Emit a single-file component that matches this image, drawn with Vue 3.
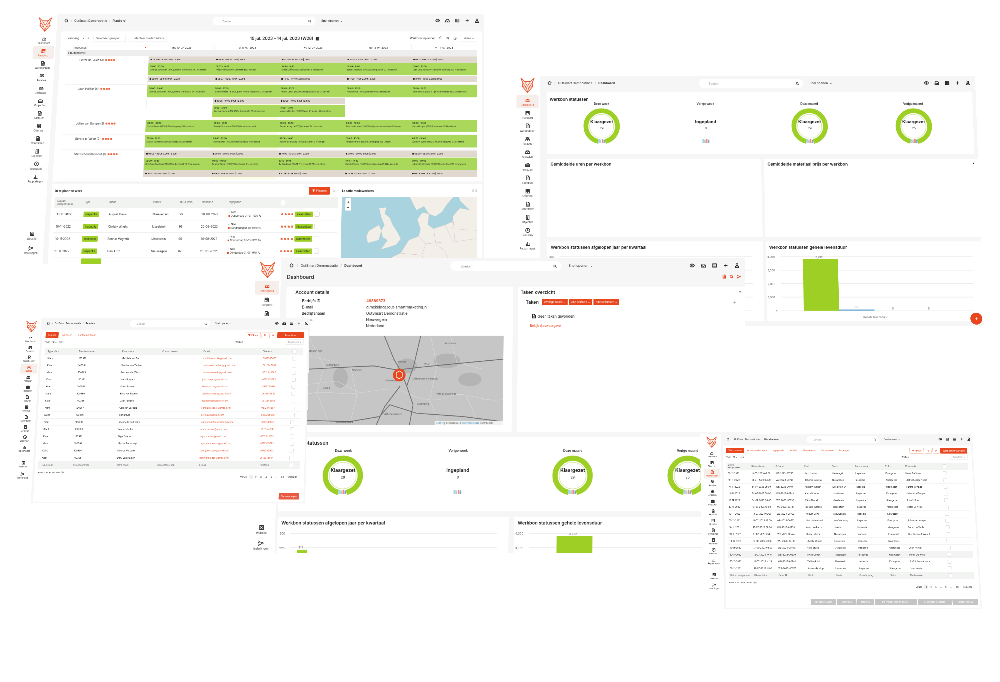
<script setup>
const icons = {
  dash: 'M3 11a5 5 0 1 1 10 0M8 11l2.5-3.5M2 13h12',
  plan: 'M3 4h10v10H3zM3 7h10M5.5 2v3M10.5 2v3M5 9.5h2M9 9.5h2M5 12h2',
  doc: 'M4 2h6l3 3v9H4zM10 2v3h3M6 8h5M6 11h5',
  people: 'M5.5 7a2 2 0 1 0 0-4 2 2 0 0 0 0 4M10.5 7a2 2 0 1 0 0-4 2 2 0 0 0 0 4M2 13c0-3 2-4 3.5-4S8 10 8 13M8 13c0-3 1-4 2.5-4S14 10 14 13',
  box: 'M2 8h12v5H2zM5 8V5h6v3M3 8l1-3M13 8l-1-3M7 10.5h2',
  brief: 'M2 6h12v7H2zM6 6V3.5h4V6M2 9.5h12',
  grid: 'M3 3h10v11H3zM3 6.5h10M3 10h10M8 3v11',
  tablet: 'M4 2h8v12H4zM6 5h4M6 8h4M7 12h2',
  clock: 'M8 2a6 6 0 1 0 0 12A6 6 0 0 0 8 2M8 5v3.5l2.5 1.5',
  bars: 'M2 14h12M4 13V8M8 13V4M12 13V6',
  web: 'M3 3h10v10H3zM5.5 8a2.5 2.5 0 1 0 5 0 2.5 2.5 0 0 0-5 0',
  nodes: 'M3 4a2 2 0 1 0 0 .1M13 8a2 2 0 1 0 0 .1M3 12a2 2 0 1 0 0 .1M5 4.5l6 3M5 11.5l6-3',
  eye: 'M1.5 8S4 3.5 8 3.5 14.5 8 14.5 8 12 12.5 8 12.5 1.5 8 1.5 8M8 6a2 2 0 1 0 0 4 2 2 0 0 0 0-4',
  inbox: 'M2 9l2-5h8l2 5v4H2zM2 9h3.5l1 1.5h3L10.5 9H14',
  table: 'M2.5 3h11v10h-11zM2.5 6.5h11M2.5 10h11M6.5 3v10',
  plus: 'M8 3v10M3 8h10',
  user: 'M8 2.5a2.8 2.8 0 1 0 0 5.6 2.8 2.8 0 0 0 0-5.6M3 14c0-3.2 2.2-4.5 5-4.5s5 1.3 5 4.5z',
  home: 'M2 8l6-5 6 5M4 7v6h8V7',
  search: 'M7 3a4 4 0 1 0 0 8 4 4 0 0 0 0-8M10 10l4 4'
}
const side = [
  ['Dashboard', 'dash'], ['Planbord', 'plan'], ['Werkbonnen', 'doc'], ['Relaties', 'people'],
  ['Artikelen', 'box'], ['Projecten', 'brief'], ['Facturen', 'doc'], ['Offertes', 'grid'],
  ['Contracten', 'doc'], ['Objecten', 'tablet'], ['Urenstaat', 'clock'], ['Rapportages', 'bars']
]
const foot = [['Website', 'web'], ['Instellingen', 'nodes']]
const topIcons = ['eye', 'inbox', 'table', 'plus', 'user']

function matrix(c, w, h) {
  const [[x0, y0], [x1, y1], [x2, y2], [x3, y3]] = c
  const dx1 = x1 - x2, dx2 = x3 - x2, sx = x0 - x1 + x2 - x3
  const dy1 = y1 - y2, dy2 = y3 - y2, sy = y0 - y1 + y2 - y3
  const den = dx1 * dy2 - dx2 * dy1
  const g = (sx * dy2 - dx2 * sy) / den
  const k = (dx1 * sy - sx * dy1) / den
  const a = x1 - x0 + g * x1, b = x3 - x0 + k * x3
  const d = y1 - y0 + g * y1, e = y3 - y0 + k * y3
  const m = [a / w, d / w, 0, g / w, b / h, e / h, 0, k / h, 0, 0, 1, 0, x0, y0, 0, 1]
  return { width: w + 'px', height: h + 'px', transform: `matrix3d(${m.join(',')})` }
}

const windows = [
  { id: 'a', kind: 'planner', crumb: 'Planbord', active: 1, style: matrix([[31, 14], [484, 14], [484, 264], [15, 264]], 1383, 750) },
  { id: 'b', kind: 'stats', crumb: 'Dashboard', active: 0, style: matrix([[512, 76], [975, 76], [984, 326], [512, 326]], 1343, 725) },
  { id: 'c', kind: 'home', crumb: 'Dashboard', active: 0, style: matrix([[251, 258], [745, 258], [745, 553], [244, 553]], 1323, 797) },
  { id: 'd', kind: 'relaties', crumb: 'Relaties', active: 3, style: matrix([[20, 318], [310, 318], [305, 503], [9, 503]], 1102, 703) },
  { id: 'e', kind: 'werkbonnen', crumb: 'Werkbonnen', active: 2, style: matrix([[700, 434], [972, 434], [982, 609], [703, 609]], 1065, 683) }
]

const days = ['ma 10-07-2023', 'di 11-07-2023', 'wo 12-07-2023', 'do 13-07-2023', 'vr 14-07-2023']
const B = t => ({ t: 'b', time: t })
const G = (time, text) => ({ t: 'g', time, text })
const planner = [
  { name: 'Pieter De Vries (3)', days: [
    [B('09:00 - 09:00 3.00h | 2.63u'), G('09:00 - 10:00', 'Geertje Schrurten (16005)Nieuw onnestraat 24 IJsselstein'), B('09:00 - 09:00 3.00h | 2.63u')],
    [B('09:37 - 09:37 1.00h | 2.00u'), G('09:37 - 10:37', 'Philip Pluim (16007)Lekkerstraat 3 Houten'), B('09:37 - 09:37 1.00h | 2.00u')],
    [B('10:00 - 10:10 1.00h | 2.00u'), G('10:10 - 14:40', 'Ghilia Coffey (16021)Lingepad 11 IJsselstein'), B('14:40 - 14:40 1.00h | 2.00u')],
    [B('10:00 - 10:00 2.00h | 2.00u'), G('10:00 - 11:00', 'Isabella Watson (17005)Ramsgrachtje 27 IJsselstein'), B('11:00 - 11:00 2.00h | 2.00u')],
    [B('09:00 - 09:00 3.00h | 2.00u'), G('09:00 - 10:00', 'Jarri Jordan (16007)Zandrijkt hogeweg 167 Nieuwegein'), B('10:00 - 10:00 3.00h | 2.00u')]
  ] },
  { name: 'Joan Holder (4)', days: [
    [G('08:00 - 09:00', 'Geertje Schrurten (16005)Nieuw onnestraat 24 IJsselstein')],
    [G('08:00 - 10:00', 'Elz Dohmeijer (16010)Op het Houtw onsgracht 2 IJsselstein'), B('10:00 - 10:00 3.00h | 2.00u'), G('11:00 - 13:00', 'Lucy Andersen (16003)De Krommate 20 Nieuwegein')],
    [G('08:00 - 10:00', 'Aurora Lewis (16008)Kerkepanstraat 69 IJsselstein'), B('10:00 - 10:00 3.00h | 2.00u'), G('11:00 - 13:00', 'Amaera Dunlop (15001)Cape Kennedy 10 IJsselstein')],
    [G('08:00 - 10:00', 'Heidi Bruce (16003)Vleuterhoek 5 IJsselstein')],
    [G('08:00 - 10:00', 'Elton Mccall (16002)Lijn bunt onderstraat 22 IJsselstein')]
  ] },
  { name: 'Julian van Kampe (2)', days: [
    [G('09:00 - 09:30', 'Thom Bazan (16009)Wiechingweg 5 Noordeloos')],
    [G('09:00 - 10:30', 'Geertje Schrurten (16005)Nieuw onnestraat')],
    [G('09:00 - 10:30', 'Brian Landry (16007)Onderwal 14 IJsselstein')],
    [G('09:00 - 10:30', 'Lise Underwood (16001)Hofje van wijzerstraat 4 Vleuten')],
    [G('09:00 - 10:30', 'Alexa Hooper (16003)Maanzee 59 IJsselstein')]
  ] },
  { name: 'Gerard te Velde (2)', days: [
    [G('09:00 - 10:00', 'Mason Gonzales (16006)Hardijn 23 IJsselstein')],
    [G('09:00 - 10:00', 'Thom Bazan (16009)Wiechingweg 5 Noordeloos')],
    [G('09:00 - 10:00', 'Justine Scarsburg (16006)Kraayert 3 Nijmegen')],
    [G('09:00 - 10:00', 'Ambrose Perry (16008)Lindenpiep 105 Utrecht')],
    [G('09:00 - 10:00', 'Anthony Walton (15021)Oudenrijnseweg 2 IJsselstein')]
  ] },
  { name: 'Stef Schoordervoord (1)', days: [
    [B('08:00 - 09:00 3.00h | 2.00u'), G('09:00 - 10:40', 'Bernhard Kaufman (15008)Kerkerstraat 110 Nieuwegein'), B('10:40 - 10:40 3.00h | 2.00u')],
    [B('08:00 - 09:00 3.00h | 2.00u'), G('09:00 - 09:00', 'Reuben Snider (15007)Buurtstraat 5 IJsselstein'), B('09:00 - 09:10 3.00h | 2.00u')],
    [B('10:00 - 10:05 3.00h | 2.00u'), G('10:15 - 14:45', 'Ty Randolph (16001)Preugvogel 578 IJsselstein'), B('10:15 - 10:15 3.00h | 2.00u')],
    [B('09:00 - 09:00 3.00h | 2.00u'), G('10:15 - 10:45', 'Candy Palmer (15003)Zonnebloemrad 38 Nieuwegein'), B('10:45 - 10:45 3.00h | 2.00u')],
    [B('09:00 - 09:00 3.00h | 2.00u'), G('09:00 - 09:05', 'Johnnette Cortada (15002)Meerkelburg 110 Nieuwegein'), B('09:05 - 09:05 3.00h | 2.00u')]
  ] }
]
const todo = [
  ['10-11-2022', 'August Davis', 'Nieuwegein', '99', '20-08-2022'],
  ['10-11-2022', 'Christy Wright', 'IJsselstein', '99', '20-08-2022'],
  ['10-11-2022', 'Ronnie Mcgrath', 'IJsselstein', '99', '20-08-2022'],
  ['10-11-2022', 'Elani Lutz', 'Nieuwegein', '99', '20-08-2022']
]

const donutsB = [
  { t: 'Deze week', n: 29, s: 'Klaargezet', ring: true },
  { t: 'Vorige week', n: 0, s: 'Ingepland', ring: false },
  { t: 'Deze maand', n: 29, s: 'Klaargezet', ring: true },
  { t: 'Vorige maand', n: 25, s: 'Klaargezet', ring: true }
]
const account = [
  ['Bedrijfs ID', '49889373', true], ['E-mail', 'g.mekking@out-smartmarketing.nl'],
  ['Bedrijfsnaam', 'OutSmart Demonstratie'], ['Plaats', 'Nieuwegein'], ['Land', 'Nederland']
]
const mapLabels = [
  ['Alphen aan den Rijn', 180, 298], ['Bodegraven', 245, 340], ['Gouda', 228, 408], ['Utrecht', 455, 330],
  ['Zeist', 530, 338], ['Amersfoort', 600, 275], ['Driebergen-Rijsenburg', 525, 380], ['Woerden', 320, 355],
  ['Culemborg', 520, 455], ['Vijfheerenlanden', 430, 485], ['Alblasserwaard', 285, 508], ['Wijk bij Duurstede', 590, 425], ['Nieuwegein', 425, 386]
]

const names = ['Mathilde van Dis', 'Pauline van Zaphen', 'Lou van der Werk', 'Jack Burgers', 'Kevin Bakker', 'Elise van Rooijen', 'Daan Prinsen', 'Carolien Jaspers', 'Geri Davis', 'Jeannette de Leeuw', 'Marnix Jonker', 'Olga Bontrop', 'Myrthe Bouwmap', 'Fleurtje Verbeek', 'Dirry van Heiden']
const relaties = names.map((n, i) => ({
  nr: 100376 + (i * 7) % 9 + i,
  name: n,
  mail: n.toLowerCase().replace(/ /g, '') + '@gmail.com',
  tel: '061234' + (5680 + i)
}))

const wb = [
  ['10-07-2023 09:00', 'WB-2023-00750', 'Jarri Jordan', 'Nieuwegein', 'Pieter De Vries'],
  ['14-07-2023 09:00', 'WB-2023-00748', 'Johnnie Dunway', 'Nieuwegein', 'Stef Schoordervoord'],
  ['14-07-2023 08:00', 'WB-2023-00746', 'Anthony Walton', 'IJsselstein Ut', 'Gerard te Velde'],
  ['14-07-2023 09:00', 'WB-2023-00743', 'Alexa Hooper', 'IJsselstein', 'Julian van Kampe'],
  ['14-07-2023 08:00', 'WB-2023-00735', 'Elton Mccall', 'IJsselstein', 'Joan Holder'],
  ['13-07-2023 10:00', 'WB-2023-00737', 'Isabella Watson', 'IJsselstein', 'Pieter De Vries'],
  ['13-07-2023 09:00', 'WB-2023-00707', 'August Davis', 'Nieuwegein', ''],
  ['13-07-2023 09:00', 'WB-2023-00731', 'Lise Underwood', 'Hoef en Haag', 'Julian van Kampe'],
  ['13-07-2023 09:00', 'WB-2023-00733', 'Ambrose Perry', 'Utrecht', 'Gerard te Velde'],
  ['13-07-2023 10:15', 'WB-2023-00745', 'Daisy Palmer', 'Nieuwegein', 'Stef Schoordervoord'],
  ['13-07-2023 08:00', 'WB-2023-00708', 'Christy Wright', 'IJsselstein', ''],
  ['13-07-2023 08:00', 'WB-2023-00749', 'Heidi Bruce', 'IJsselstein', 'Joan Holder'],
  ['12-07-2023 10:10', 'WB-2023-00570', 'Ghilia Coffey', 'IJsselstein', 'Pieter De Vries'],
  ['12-07-2023 10:15', 'WB-2023-00740', 'Ty Randolph', 'IJsselstein', 'Stef Schoordervoord'],
  ['12-07-2023 11:00', 'WB-2023-00576', 'Amaera Dunlop', 'IJsselstein', 'Joan Holder']
]
const wbTabs = ['Onderhanden werk', 'Ingeplande', 'Archief', 'Aflevernotas', 'Formulieren', 'Bonnages']
const wbActions = ['Selectie archiveren', 'Verwerken', 'Factureren ⌄', 'PDF werkbonnen en mailen ⌄', 'Combineren tot gereed', 'Toevoegen aan ZIP']
const pages = ['1', '2', '3', '4', '5', '…']
</script>

<template>
  <div class="canvas">
    <section v-for="w in windows" :key="w.id" class="win" :class="'win-' + w.id" :style="w.style">
      <aside class="side">
        <svg class="fox" viewBox="0 0 40 40" fill="none" stroke="#e8552b" stroke-width="1.8" stroke-linejoin="round">
          <path d="M4 3l5 12-2 8 13 15 13-15-2-8 5-12-9 8H13z" fill="#fdece6" />
          <path d="M13 11l7 12 7-12M9 15l8 11 3 12 3-12 8-11M7 23l10 3M33 23l-10 3" stroke-width="1.3" />
        </svg>
        <div v-for="(s, i) in side" :key="s[0]" class="nav" :class="{ on: i === w.active }">
          <svg viewBox="0 0 16 16"><path :d="icons[s[1]]" /></svg>
          <span>{{ s[0] }}</span>
        </div>
        <div class="feet">
          <div v-for="s in foot" :key="s[0]" class="nav">
            <svg viewBox="0 0 16 16"><path :d="icons[s[1]]" /></svg>
            <span>{{ s[0] }}</span>
          </div>
        </div>
      </aside>

      <div class="main">
        <header class="top">
          <div class="crumbs">
            <svg viewBox="0 0 16 16"><path :d="icons.home" /></svg>
            <i>/</i><span>OutSmart Demonstratie</span><i>/</i><b>{{ w.crumb }}</b>
          </div>
          <div class="search"><span>Zoeken</span><svg viewBox="0 0 16 16"><path :d="icons.search" /></svg></div>
          <div class="quick">Snel openen &nbsp;⌄</div>
          <div class="tools"><svg v-for="t in topIcons" :key="t" viewBox="0 0 16 16"><path :d="icons[t]" /></svg></div>
        </header>

        <!-- PLANBORD -->
        <template v-if="w.kind === 'planner'">
          <div class="card plan-card">
            <div class="plan-bar">
              <div class="plan-left">
                <span>Vandaag</span><span>‹</span><span>›</span>
                <span class="ghost">Selecteer groepen...</span><span class="ghost">Selecteer medewerkers</span>
              </div>
              <strong>10 jul. 2023 – 14 jul. 2023 (W28) &nbsp;▦</strong>
              <div class="plan-right">
                <span>Werkbon inplannen</span><span>ⓘ</span>
                <svg viewBox="0 0 16 16"><path :d="icons.search" /></svg>
                <svg viewBox="0 0 16 16"><path :d="icons.clock" /></svg>
                <span class="ghost">Week ⌄</span>
              </div>
            </div>
            <div class="pgrid">
              <div class="ph">Resources <em>■</em></div>
              <div v-for="d in days" :key="d" class="ph center">{{ d }}</div>
              <div class="pgroup">▾ Buitendienst</div>
              <template v-for="r in planner" :key="r.name">
                <div class="pname">{{ r.name }}
                  <u v-for="n in 4" :key="n" class="mini"></u>
                </div>
                <div v-for="(d, di) in r.days" :key="di" class="pday" :class="{ today: di === 1 }">
                  <div v-for="(ev, ei) in d" :key="ei" class="ev" :class="ev.t">
                    <b>{{ ev.t === 'b' ? '■ ' : '' }}{{ ev.time }}</b>
                    <span v-if="ev.text">{{ ev.text }}</span>
                  </div>
                </div>
              </template>
            </div>
          </div>
          <div class="card plan-lower">
            <div class="todo">
              <div class="todo-head"><strong>In te plannen werk</strong><span class="btn red">▼ Filteren</span><span class="dim">⧉ ⌄</span></div>
              <div class="trow thead">
                <span>Datum<br>aangemaakt</span><span>Type</span><span>Klant</span><span>Plaats</span><span>Duur (min)</span><span>Deadline</span><span>Ingepland</span><span><u class="check"></u></span>
              </div>
              <div v-for="t in todo" :key="t[1]" class="trow">
                <span>{{ t[0] }}</span><span><mark>Inspectie</mark></span><span>{{ t[1] }}</span><span>{{ t[2] }}</span><span>{{ t[3] }}</span><span>{{ t[4] }}</span>
                <span class="ing"><i class="okc">✓</i> Nee<br><i class="redc">■</i> Donderdag 01-01-1970 ?u</span>
                <span class="acts"><u v-for="n in 4" :key="n" class="mini"></u><mark>Klaarzetten</mark><u class="check"></u></span>
              </div>
              <div class="trow stub"><span></span><span><mark class="stubmark"></mark></span></div>
            </div>
            <div class="loc">
              <div class="todo-head"><strong>Locatie medewerkers</strong><span class="dim right">⧉ ⧉</span></div>
              <div class="mapbox">
                <svg viewBox="3 10 414 182" preserveAspectRatio="none">
                  <rect x="0" y="0" width="426" height="198" fill="#a9d3de" />
                  <g fill="#f2efe9" stroke="#d9cfc6" stroke-width=".6">
                    <path d="M118 40L140 38 135 55 150 65 160 85 175 105 185 122 170 138 125 150 145 125 130 118 125 100 135 85 125 65Z" />
                    <path d="M88 100L118 85 125 100 118 125 85 133 80 115Z" />
                    <path d="M135 198L160 170 185 160 210 125 240 115 245 95 235 70 250 52 270 55 268 85 285 95 320 85 345 75 390 65 426 60V198Z" />
                    <path d="M208 5L232 45 255 35 270 55 290 62 310 50 325 30 345 10V0H208Z" />
                    <path d="M340 95L345 60 365 40 395 45 365 20 360 5 426 0V100Z" />
                  </g>
                  <g fill="none" stroke="#d9b9c9" stroke-width=".8">
                    <path d="M240 115L262 135 250 165 262 198M285 95L292 135 320 155 340 198M320 85L345 130 426 120M262 135L320 130M185 160L250 165M345 75L350 130" />
                  </g>
                  <rect x="14" y="13" width="18" height="34" rx="2" fill="#fff" stroke="#bbb" stroke-width=".8" />
                  <path d="M20 24h6M23 21v6M20 38h6" stroke="#333" stroke-width="1.6" />
                </svg>
              </div>
            </div>
          </div>
        </template>

        <!-- DASHBOARD B -->
        <template v-else-if="w.kind === 'stats'">
          <div class="card stat-card">
            <h3>Werkbon statussen</h3>
            <div class="donuts">
              <div v-for="d in donutsB" :key="d.t" class="dcol">
                <b>{{ d.t }}</b>
                <div class="donut">
                  <svg viewBox="0 0 100 100" fill="none">
                    <template v-if="d.ring">
                      <circle cx="50" cy="50" r="43" stroke="#9dcf25" stroke-width="13" stroke-dasharray="250 20.2" stroke-dashoffset="-10" transform="rotate(90 50 50)" />
                      <circle cx="50" cy="50" r="33" stroke="#d5e8a2" stroke-width="1.6" />
                    </template>
                    <g>
                      <rect x="40" y="85" width="5" height="11" fill="#a6d6ea" /><rect x="45" y="87" width="4" height="9" fill="#c9c9c9" />
                      <rect x="50" y="85" width="4" height="11" fill="#ea8f80" /><rect x="55" y="87" width="4" height="9" fill="#7aa7c9" />
                    </g>
                  </svg>
                  <p class="dtxt"><strong>{{ d.s }}</strong><span>{{ d.n }}</span></p>
                </div>
              </div>
            </div>
          </div>
          <div class="two mid">
            <div class="card"><h3>Gemiddelde uren per werkbon</h3></div>
            <div class="card"><h3>Gemiddelde materiaal prijs per werkbon</h3><em class="corner">▲</em></div>
          </div>
          <div class="two low">
            <div class="card chartcard">
              <h3>Werkbon statussen afgelopen jaar per kwartaal</h3>
              <svg class="chart" viewBox="0 0 626 238">
                <g stroke="#ececec" stroke-width="2"><path d="M35 43H595M35 82H595M35 121H595M35 160H595M35 200H595" /></g>
                <text x="6" y="46">300</text>
                <rect x="54" y="88" width="27" height="112" fill="#9dcf25" />
                <text x="58" y="84">214</text>
              </svg>
            </div>
            <div class="card chartcard">
              <h3>Werkbon statussen gehele levensduur</h3>
              <svg class="chart" viewBox="0 0 626 238">
                <g stroke="#ececec" stroke-width="2"><path d="M42 43H600M42 82H600M42 121H600M42 160H600M42 200H600" /></g>
                <text x="4" y="46">4,000</text><text x="4" y="86">3,000</text><text x="4" y="125">2,000</text><text x="4" y="164">1,000</text><text x="26" y="204">0</text>
                <rect x="107" y="50" width="102" height="150" fill="#9dcf25" />
                <rect x="209" y="196" width="102" height="4" fill="#7ab3d8" />
                <text x="144" y="47">3,792</text><text x="254" y="192">85</text><text x="362" y="196">5</text><text x="466" y="196">5</text>
                <text x="278" y="222">Gehele levensduur</text>
              </svg>
            </div>
          </div>
          <div class="fab">+</div>
        </template>

        <!-- DASHBOARD C -->
        <template v-else-if="w.kind === 'home'">
          <div class="title-row">
            <h2>Dashboard</h2>
            <div class="otools">
              <svg viewBox="0 0 16 16"><path :d="icons.doc" /></svg>
              <svg viewBox="0 0 16 16"><path :d="icons.search" /></svg>
              <svg viewBox="0 0 16 16"><path :d="icons.nodes" /></svg>
            </div>
          </div>
          <div class="two acct-row">
            <div class="card acct">
              <h3>Account details</h3>
              <dl>
                <template v-for="a in account" :key="a[0]">
                  <dt>{{ a[0] }}</dt><dd :class="{ oid: a[2] }">{{ a[1] }}</dd>
                </template>
              </dl>
              <div class="nlmap">
                <svg viewBox="129 250 631 265" preserveAspectRatio="none">
                  <rect x="129" y="250" width="631" height="265" fill="#c6c6c6" />
                  <g fill="#b4b4b4">
                    <ellipse cx="270" cy="375" rx="22" ry="30" /><ellipse cx="590" cy="325" rx="40" ry="22" /><ellipse cx="470" cy="340" rx="30" ry="22" /><ellipse cx="660" cy="380" rx="35" ry="20" />
                  </g>
                  <g fill="none" stroke="#dcdcdc" stroke-width="1.2">
                    <path d="M129 440C200 400 260 430 330 420S430 400 470 420 560 450 600 430 700 450 760 440" />
                    <path d="M129 300L260 330M540 250L560 340M600 250L620 330 700 350M170 250L220 340 200 420 240 515M300 340L320 430 300 515M560 340L540 440 570 515M650 430L690 515M129 400L260 385 330 420" />
                  </g>
                  <g fill="none" stroke="#6f6f6f" stroke-width="2.4">
                    <path d="M129 352L260 345 370 340 440 352 500 345 600 335 760 320" />
                    <path d="M400 250L430 320 450 352 470 400 490 455 480 515" />
                    <path d="M510 250L490 340 470 400" />
                    <path d="M129 500L300 505 390 490 420 455 500 480 640 490 760 505" />
                    <path d="M380 515L405 460 450 400" />
                  </g>
                  <text v-for="l in mapLabels" :key="l[0]" :x="l[1]" :y="l[2]" class="mlab" text-anchor="middle">{{ l[0] }}</text>
                  <circle cx="447" cy="367" r="19" fill="#e8461e" />
                  <path d="M438 360l9-5 9 5v13l-9 5-9-5z" fill="none" stroke="#fff" stroke-width="2" />
                  <rect x="556" y="503" width="204" height="12" fill="#f1f1f1" />
                  <text x="560" y="512" class="attr"><tspan fill="#3a8fb7">Leaflet</tspan> | © Sandbox, © <tspan fill="#3a8fb7">OpenStreetMap</tspan> contributors</text>
                </svg>
              </div>
            </div>
            <div class="card taken">
              <h3>Taken overzicht <em class="corner">▲</em></h3>
              <div class="taken-row">
                <strong>Taken</strong><span class="tag">Overige taken ⌄</span><span class="tag">Alle periode ⌄</span><span class="tag">Alle statussen ⌄</span><span class="add">+</span>
              </div>
              <p class="empty"><svg viewBox="0 0 16 16"><path :d="icons.doc" /></svg> Geen taken gevonden!</p>
              <p class="link">Bekijk tijdsweergave</p>
            </div>
          </div>
          <div class="card stat-card big">
            <h3>Werkbon statussen</h3>
            <div class="donuts">
              <div v-for="d in donutsB" :key="d.t" class="dcol">
                <b>{{ d.t }}</b>
                <div class="donut">
                  <svg viewBox="0 0 100 100" fill="none">
                    <template v-if="d.ring">
                      <circle cx="50" cy="50" r="43" stroke="#9dcf25" stroke-width="13" stroke-dasharray="250 20.2" stroke-dashoffset="-10" transform="rotate(90 50 50)" />
                      <circle cx="50" cy="50" r="33" stroke="#d5e8a2" stroke-width="1.6" />
                    </template>
                    <g>
                      <rect x="40" y="85" width="5" height="11" fill="#a6d6ea" /><rect x="45" y="87" width="4" height="9" fill="#c9c9c9" />
                      <rect x="50" y="85" width="4" height="11" fill="#ea8f80" /><rect x="55" y="87" width="4" height="9" fill="#7aa7c9" />
                    </g>
                  </svg>
                  <p class="dtxt"><strong>{{ d.s }}</strong><span>{{ d.n }}</span></p>
                </div>
              </div>
            </div>
          </div>
          <div class="two low">
            <div class="card chartcard">
              <h3>Werkbon statussen afgelopen jaar per kwartaal</h3>
              <svg class="chart" viewBox="0 0 626 238">
                <g stroke="#ececec" stroke-width="2"><path d="M35 43H595M35 82H595" /></g>
                <text x="6" y="46">300</text><text x="6" y="86">225</text>
                <rect x="54" y="88" width="27" height="112" fill="#9dcf25" />
                <text x="58" y="84">214</text>
              </svg>
            </div>
            <div class="card chartcard">
              <h3>Werkbon statussen gehele levensduur</h3>
              <svg class="chart" viewBox="0 0 626 238">
                <g stroke="#ececec" stroke-width="2"><path d="M42 43H600M42 82H600" /></g>
                <text x="4" y="46">4,000</text><text x="4" y="86">3,000</text>
                <rect x="116" y="50" width="97" height="150" fill="#9dcf25" />
                <text x="150" y="47">3,792</text>
              </svg>
            </div>
          </div>
        </template>

        <!-- RELATIES -->
        <div v-else-if="w.kind === 'relaties'" class="card list">
          <div class="list-bar">
            <span class="tab on">Relaties</span><span class="tab">Adressen</span><span class="tab">Contactpersonen</span>
            <span class="spacer"></span>
            <span class="btn line">▼ Filters</span><span class="btn line">⇅</span><span class="btn line">⚙</span><span class="btn red wide">Aanmaken</span>
          </div>
          <div class="show"><span>Toon <u>10 ⌄</u> rijen</span><span class="spacer"></span><span class="zoek">Zoeken:</span><span class="exp">Exporteren ⌄</span></div>
          <div class="row rel head">
            <span>Type klant</span><span>Relatienummer</span><span>Klant naam</span><span>Contactpersoon</span><span>E-mail</span><span>Telefoon</span><span><u class="check"></u></span>
          </div>
          <div v-for="r in relaties" :key="r.name" class="row rel">
            <span>Klant</span><span>{{ r.nr }}</span><span>{{ r.name }}</span><span></span><span class="o">{{ r.mail }}</span><span class="o">{{ r.tel }}</span><span><u class="check"></u></span>
          </div>
          <div class="row rel head foot-row">
            <span>Type klant</span><span>Relatienummer</span><span>Klant naam</span><span>Contactpersoon</span><span>E-mail</span><span>Telefoon</span><span><u class="check"></u></span>
          </div>
          <div class="count">Toont 1 tot 15 van 408 rijen</div>
          <div class="pager"><span>Vorige</span><span v-for="(p, i) in pages" :key="p" :class="{ cur: i === 0 }">{{ p }}</span><span>28</span><span>Volgende</span></div>
          <div class="merge"><span class="btn red">Samenvoegen</span></div>
        </div>

        <!-- WERKBONNEN -->
        <div v-else class="card list">
          <div class="list-bar">
            <span class="tab on">Werkbonnen</span><span v-for="t in wbTabs" :key="t" class="tab">{{ t }}</span>
            <span class="spacer"></span>
            <span class="btn line">▼ Filters</span><span class="btn line">⇅</span><span class="btn line">⚙</span><span class="btn red">Werkbon toevoegen</span>
          </div>
          <div class="show"><span>Toon <u>10 ⌄</u> rijen</span><span class="spacer"></span><span class="zoek">Zoeken:</span><span class="exp">Exporteren ⌄</span></div>
          <div class="row wbg head">
            <span>Datum<br>aangemaakt</span><span>Uitvoerdatum</span><span>Order Nr</span><span>Klant</span><span>Plaats</span><span>Omschrijving</span><span>Status</span><span>Medewerker</span><span><u class="check"></u></span>
          </div>
          <div v-for="(r, i) in wb" :key="r[1]" class="row wbg" :class="{ hl: i === 12 }">
            <span>10-11-2022</span><span>{{ r[0] }}</span><span>{{ r[1] }}</span><span>{{ r[2] }}</span><span>{{ r[3] }}</span><span>Inspectie</span><span>Klaargezet</span><span>{{ r[4] }}</span><span><u class="check"></u></span>
          </div>
          <div class="row wbg head foot-row">
            <span>Datum aangemaakt</span><span>Uitvoerdatum</span><span>Order Nr</span><span>Klant</span><span>Plaats</span><span>Omschrijving</span><span>Status</span><span>Medewerker</span><span><u class="check"></u></span>
          </div>
          <div class="count">Toont 1 tot 15 van 5.887 rijen</div>
          <div class="pager"><span>Vorige</span><span v-for="(p, i) in pages" :key="p" :class="{ cur: i === 0 }">{{ p }}</span><span>257</span><span>Volgende</span></div>
          <div class="actions"><span v-for="a in wbActions" :key="a">{{ a }}</span></div>
        </div>
      </div>
    </section>
  </div>
</template>

<style>
html, body { background: #fff; }
</style>

<style scoped>
.canvas, .canvas * { box-sizing: border-box; }
.canvas { position: relative; width: 1000px; height: 682px; overflow: hidden; background: #fff; filter: blur(.3px); font-family: Inter, "Liberation Sans", sans-serif; color: #1f1f1f; }
.win { position: absolute; left: 0; top: 0; transform-origin: 0 0; display: flex; overflow: hidden; background: #fff; --ml: 36.5%; --sw: 24%; }
.win-d { --ml: 33%; --sw: 30%; }
.win-e { --ml: 34%; --sw: 29%; }

.side { width: 81px; flex: none; display: flex; flex-direction: column; align-items: center; padding: 8px 0 0 8px; background: #fff; }
.win-b .side { padding-top: 3px; }
.fox { width: 48px; height: 48px; margin-bottom: 6px; flex: none; }
.nav { width: 64px; height: 38px; flex: none; display: flex; flex-direction: column; align-items: center; justify-content: center; gap: 2px; font-size: 7.5px; color: #333; border-radius: 3px; white-space: nowrap; }
.nav svg { width: 16px; height: 16px; fill: none; stroke: #333; stroke-width: 1.8; }
.nav.on { background: #f6eeeb; color: #e8461e; }
.nav.on svg { stroke: #e8461e; }
.feet { display: flex; flex-direction: column; gap: 4px; }
.win-a .feet { margin-top: 130px; }
.win-b .feet { margin-top: 100px; }
.win-c .feet { margin-top: 197px; }
.win-d .feet { margin-top: 21px; }
.win-e .feet { margin-top: 20px; gap: 0; }

.main { flex: 1; min-width: 0; background: #f6f6f6; display: flex; flex-direction: column; position: relative; }
.top { flex: none; height: 46px; display: grid; grid-template-columns: var(--ml) var(--sw) auto 1fr; align-items: start; padding-top: 9px; font-size: 9px; }
.win-a .top { height: 54px; }
.win-c .top { height: 36px; }
.crumbs { display: flex; align-items: center; gap: 7px; padding: 4px 0 0 21px; white-space: nowrap; color: #333; }
.crumbs svg { width: 14px; height: 14px; fill: none; stroke: #333; stroke-width: 1.8; }
.crumbs i { font-style: normal; color: #aaa; }
.search { height: 26px; background: #fff; border-radius: 13px; display: flex; align-items: center; justify-content: space-between; padding: 0 12px 0 28px; color: #999; }
.search svg { width: 11px; height: 11px; fill: none; stroke: #333; stroke-width: 2; }
.quick { padding: 6px 0 0 18px; white-space: nowrap; }
.tools { display: flex; justify-content: flex-end; gap: 15px; padding: 4px 14px 0 0; }
.win-d .tools, .win-e .tools { gap: 13px; padding-right: 6px; }
.tools svg { width: 15px; height: 15px; fill: none; stroke: #222; stroke-width: 1.8; }

.card { background: #fff; position: relative; }
h3 { margin: 0; font-size: 12px; font-weight: 600; color: #222; white-space: nowrap; }
.corner { position: absolute; top: 10px; right: 10px; font-size: 6px; font-style: normal; }
.btn { display: inline-block; font-size: 9px; padding: 6px 10px; border-radius: 2px; white-space: nowrap; }
.btn.red { background: #e8461e; color: #fff; }
.btn.line { border: 1px solid #f0b9a8; color: #e8461e; background: #fff; padding: 5px 8px; }
.btn.wide { min-width: 100px; text-align: center; }
.dim { color: #bbb; font-size: 9px; }
.right { margin-left: auto; }

/* planbord */
.plan-card { margin: 0 6px 8px 15px; padding: 0 15px 6px 20px; flex: none; }
.plan-bar { height: 42px; display: grid; grid-template-columns: 555px auto 1fr; align-items: center; font-size: 8.5px; }
.plan-bar strong { font-size: 12.5px; font-weight: 600; color: #222; white-space: nowrap; }
.plan-left, .plan-right { display: flex; align-items: center; gap: 12px; white-space: nowrap; }
.plan-right { justify-content: flex-end; }
.plan-right svg { width: 10px; height: 10px; fill: none; stroke: #333; stroke-width: 1.8; }
.ghost { border: 1px solid #eee; padding: 5px 8px; color: #555; }
.pgrid { display: grid; grid-template-columns: 250px repeat(5, 1fr); font-size: 6.2px; }
.ph { height: 15px; border: 1px solid #eee; border-width: 1px 1px 0 0; display: flex; align-items: center; justify-content: space-between; padding: 0 8px 0 20px; font-size: 8px; }
.ph em { color: #e8461e; font-style: normal; font-size: 5px; }
.ph.center { justify-content: center; padding: 0; }
.pgroup { grid-column: 1 / -1; height: 18px; background: #eee; display: flex; align-items: center; padding-left: 4px; font-size: 8px; }
.pname { padding: 8px 0 0 40px; font-size: 8.5px; border-bottom: 1px solid #eee; border-right: 1px solid #eee; white-space: nowrap; }
.mini { display: inline-block; width: 6px; height: 6px; margin-left: 2px; background: #ec6b45; border-radius: 50% 50% 0 50%; }
.pday { display: flex; flex-direction: column; gap: 1px; padding: 2px 0 6px; border-bottom: 1px solid #eee; min-width: 0; }
.pday.today { background: #fdfde4; }
.ev { padding: 0 3px 0 5px; overflow: hidden; white-space: nowrap; flex: none; }
.ev b { display: block; font-weight: 600; margin-bottom: 3px; }
.ev span { display: block; overflow: hidden; text-overflow: clip; }
.ev.b { background: #e1d8d0; height: 20px; padding-top: 6px; }
.ev.g { background: #a9d85a; height: 37px; padding-top: 6px; }

.plan-lower { flex: 1; margin: 0 6px 0 15px; display: flex; padding: 0 15px 0 10px; gap: 12px; min-height: 0; overflow: hidden; }
.todo { width: 842px; flex: none; }
.todo-head { height: 38px; display: flex; align-items: center; gap: 8px; font-size: 9px; }
.todo-head strong { font-weight: 700; }
.todo-head strong + .btn { margin-left: auto; }
.loc { flex: 1; min-width: 0; }
.mapbox { height: 200px; overflow: hidden; }
.mapbox svg { width: 100%; height: 100%; display: block; }
.trow { display: grid; grid-template-columns: 80px 75px 130px 80px 65px 80px 155px 177px; height: 36px; align-items: center; font-size: 8.5px; border-bottom: 1px solid #eee; padding-left: 8px; white-space: nowrap; }
.trow.thead { height: 33px; background: #f1f3f0; color: #666; line-height: 1.15; font-size: 8px; }
.trow.stub { align-items: start; border: 0; }
mark { background: #9dcf25; color: #222; padding: 3px 6px; border-radius: 2px; font-size: 8px; }
.stubmark { display: block; width: 60px; height: 18px; margin-top: 3px; }
.check { display: inline-block; width: 15px; height: 15px; border: 1px solid #ddd; border-radius: 2px; vertical-align: middle; background: #fff; }
.ing { line-height: 1.35; font-size: 7.5px; }
.okc { color: #6aa81e; font-style: normal; }
.redc { color: #e8461e; font-style: normal; font-size: 6px; }
.acts { display: flex; align-items: center; gap: 2px; }
.acts mark { margin: 0 3px; padding: 3px 5px; }

/* dashboards */
.stat-card { padding: 6px 22px 6px 8px; margin: 0 10px 14px 20px; height: 183px; flex: none; }
.win-b .stat-card h3 { padding-top: 9px; }
.donuts { display: grid; grid-template-columns: repeat(4, 1fr); margin-top: 1px; }
.dcol { display: flex; flex-direction: column; align-items: center; gap: 3px; }
.dcol > b { font-size: 8.5px; font-weight: 600; white-space: nowrap; }
.donut { position: relative; width: 106px; height: 106px; margin-top: 5px; }
.donut svg { width: 100%; height: 100%; display: block; }
.dtxt { position: absolute; inset: 33px 0 auto; margin: 0; text-align: center; line-height: 1.15; }
.dtxt strong { display: block; font-size: 12.5px; font-weight: 700; color: #222; }
.dtxt span { font-size: 9px; }
.two { display: grid; grid-template-columns: 1fr 1fr; gap: 8px; flex: none; }
.win-b .two { margin: 0 0 14px 20px; }
.mid { height: 226px; }
.mid h3 { padding: 8px 10px; }
.low { flex: 1; margin: 0; }
.chartcard h3 { padding: 9px 10px 0; }
.chart { position: absolute; inset: 0; width: 100%; height: 238px; font-size: 8px; fill: #666; font-family: Inter, "Liberation Sans", sans-serif; }
.fab { position: absolute; right: 4px; bottom: 4px; width: 34px; height: 34px; border-radius: 50%; background: #e8461e; color: #fff; text-align: center; line-height: 32px; font-size: 16px; }

.title-row { height: 42px; flex: none; display: flex; align-items: center; padding: 0 10px 12px 16px; }
.title-row h2 { margin: 0; font-size: 14px; font-weight: 500; }
.otools { margin-left: auto; display: flex; gap: 8px; }
.otools svg { width: 12px; height: 12px; fill: none; stroke: #e8461e; stroke-width: 2; }
.acct-row { margin: 0 0 14px 16px; height: 394px; gap: 14px; }
.acct { padding: 8px 24px; }
.acct dl { margin: 10px 0 0 18px; display: grid; grid-template-columns: 172px 1fr; row-gap: 4px; font-size: 10px; line-height: 13px; font-weight: 500; }
.acct dt { font-weight: 500; }
.acct dd { margin: 0; font-weight: 400; white-space: nowrap; }
.oid { color: #e8461e; font-weight: 600 !important; }
.nlmap { position: absolute; left: 24px; right: 24px; top: 134px; height: 242px; }
.nlmap svg { width: 100%; height: 100%; display: block; }
.mlab { font-size: 7px; fill: #555; font-family: Inter, "Liberation Sans", sans-serif; }
.attr { font-size: 7px; fill: #555; font-family: Inter, "Liberation Sans", sans-serif; }
.taken { padding: 8px 24px 12px 6px; }
.taken-row { display: flex; align-items: center; gap: 3px; margin: 12px 0 0 14px; font-size: 10px; }
.taken-row strong { font-size: 12px; font-weight: 600; margin-right: 5px; }
.tag { background: #e8461e; color: #fff; font-size: 7.5px; padding: 3px 6px; white-space: nowrap; }
.add { margin-left: auto; color: #999; font-size: 12px; }
.empty { display: flex; align-items: center; gap: 3px; margin: 24px 0 0 29px; font-size: 9.5px; }
.empty svg { width: 14px; height: 14px; fill: none; stroke: #222; stroke-width: 1.8; }
.link { margin: 14px 0 0 26px; font-size: 8.5px; color: #e8461e; }
.big { margin: 0 0 14px 6px; height: 200px; padding: 6px 0 6px 18px; }
.big h3 { font-size: 13px; padding-top: 2px; margin-left: -10px; }
.big .donuts { margin-top: 8px; }
.big .donut { width: 108px; height: 108px; }
.win-c .low { margin-left: 6px; gap: 14px; }

/* lists */
.list { flex: 1; margin: 0 6px 3px 8px; padding: 8px 16px 0 12px; min-height: 0; position: relative; }
.list-bar { display: flex; align-items: center; gap: 4px; height: 24px; }
.spacer { flex: 1; }
.tab { font-size: 8.5px; color: #e8461e; padding: 6px 9px; white-space: nowrap; }
.tab.on { background: #e8461e; color: #fff; border-radius: 2px; }
.show { display: flex; align-items: center; font-size: 8px; height: 38px; padding-bottom: 8px; }
.win-e .show { height: 36px; }
.show u { text-decoration: none; margin: 0 6px; }
.zoek { width: 190px; }
.exp { color: #888; border: 1px solid #eee; padding: 4px 8px; }
.row { display: grid; align-items: center; height: 27px; font-size: 8.5px; border-bottom: 1px solid #f1f1f1; padding-left: 6px; white-space: nowrap; overflow: hidden; }
.row.wbg { height: 26.5px; }
.row.head { background: #f2f4f2; color: #666; }
.rel { grid-template-columns: 118px 163px 152px 156px 226px 111px 55px; padding-left: 12px; }
.wbg { grid-template-columns: 91px 94px 112px 107px 91px 117px 78px 146px 60px; }
.row.wbg.head:not(.foot-row) { height: 30px; line-height: 1.15; font-size: 8px; }
.row.hl { background: #f3f3f3; }
.foot-row { color: #777; }
.o { color: #e8603c; }
.count { font-size: 8px; margin: 9px 0 0 0; }
.pager { display: flex; justify-content: flex-end; gap: 2px; font-size: 8px; padding-right: 4px; margin-top: 4px; }
.pager span { padding: 3px 6px; }
.pager .cur { background: #f1f1f1; border-radius: 2px; }
.merge { position: absolute; right: 16px; bottom: 10px; }
.merge .btn { background: #e85a44; padding: 7px 10px; font-size: 8.5px; }
.actions { position: absolute; right: 8px; bottom: 13px; display: grid; grid-template-columns: 97px 75px 65px 160px 130px 97px; gap: 3px; }
.actions span { background: #c4c4c4; color: #fff; font-size: 7.5px; padding: 6px 0; white-space: nowrap; text-align: center; }
</style>
